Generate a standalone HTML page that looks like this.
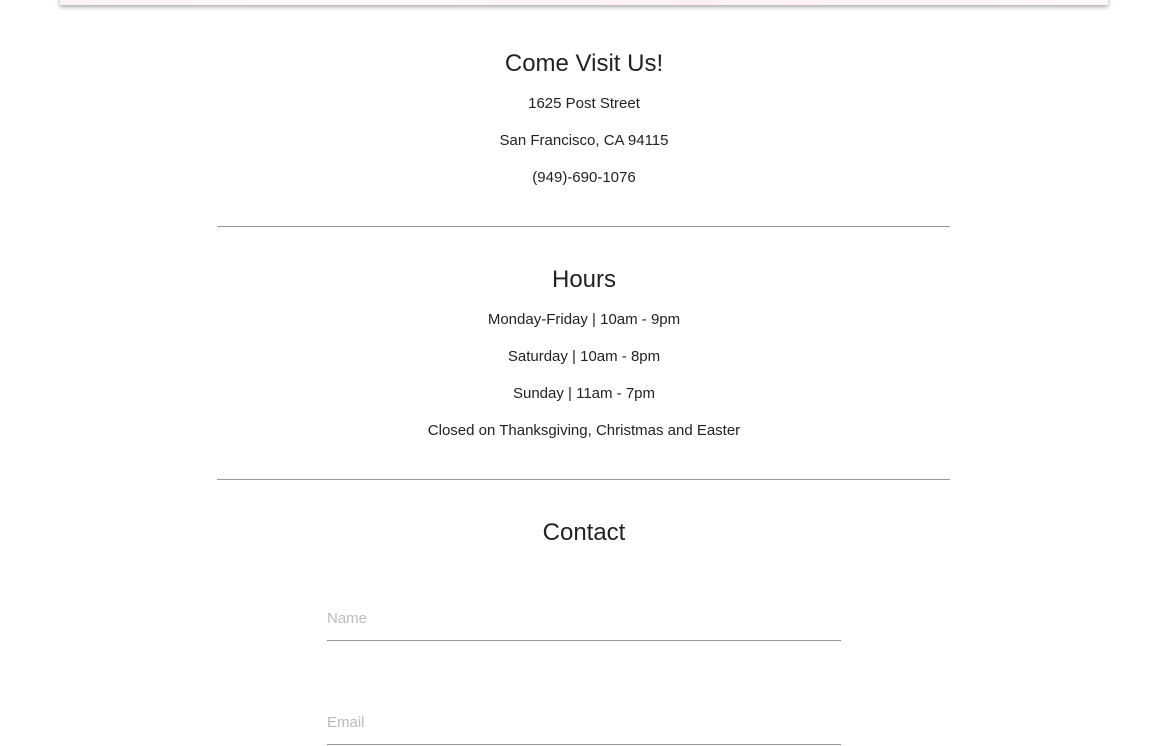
<!DOCTYPE html>
<html><head><style>
body{margin:0;width:1161px;height:746px;overflow:hidden;background:#fff;font-family:"Liberation Sans",sans-serif;color:#222;position:relative}
.map{position:absolute;left:60px;top:-10px;width:1048px;height:15px;background:linear-gradient(90deg,#fbf3f3,#fdf7f7 30%,#fbf1f1 60%,#fdf6f6);box-shadow:0 2px 5px rgba(0,0,0,.35)}
.c{position:absolute;left:0;width:1168px;text-align:center}
h2{font-weight:normal;font-size:24px;margin:0}
p{font-size:15px;margin:0}
hr{position:absolute;left:217px;width:733px;border:0;border-top:1px solid #999;margin:0}
.f{position:absolute;left:327px;width:514px;border-bottom:1px solid #999;color:#bbb;font-size:15px;height:30px}
</style></head><body>
<div class="map"></div>
<h2 class="c" style="top:50px">Come Visit Us!</h2>
<p class="c" style="top:95px">1625 Post Street</p>
<p class="c" style="top:132px">San Francisco, CA 94115</p>
<p class="c" style="top:169px">(949)-690-1076</p>
<hr style="top:226px">
<h2 class="c" style="top:266px">Hours</h2>
<p class="c" style="top:311px">Monday-Friday | 10am - 9pm</p>
<p class="c" style="top:348px">Saturday | 10am - 8pm</p>
<p class="c" style="top:385px">Sunday | 11am - 7pm</p>
<p class="c" style="top:422px">Closed on Thanksgiving, Christmas and Easter</p>
<hr style="top:479px">
<h2 class="c" style="top:519px">Contact</h2>
<div class="f" style="top:610px">Name</div>
<div class="f" style="top:714px">Email</div>
</body></html>
